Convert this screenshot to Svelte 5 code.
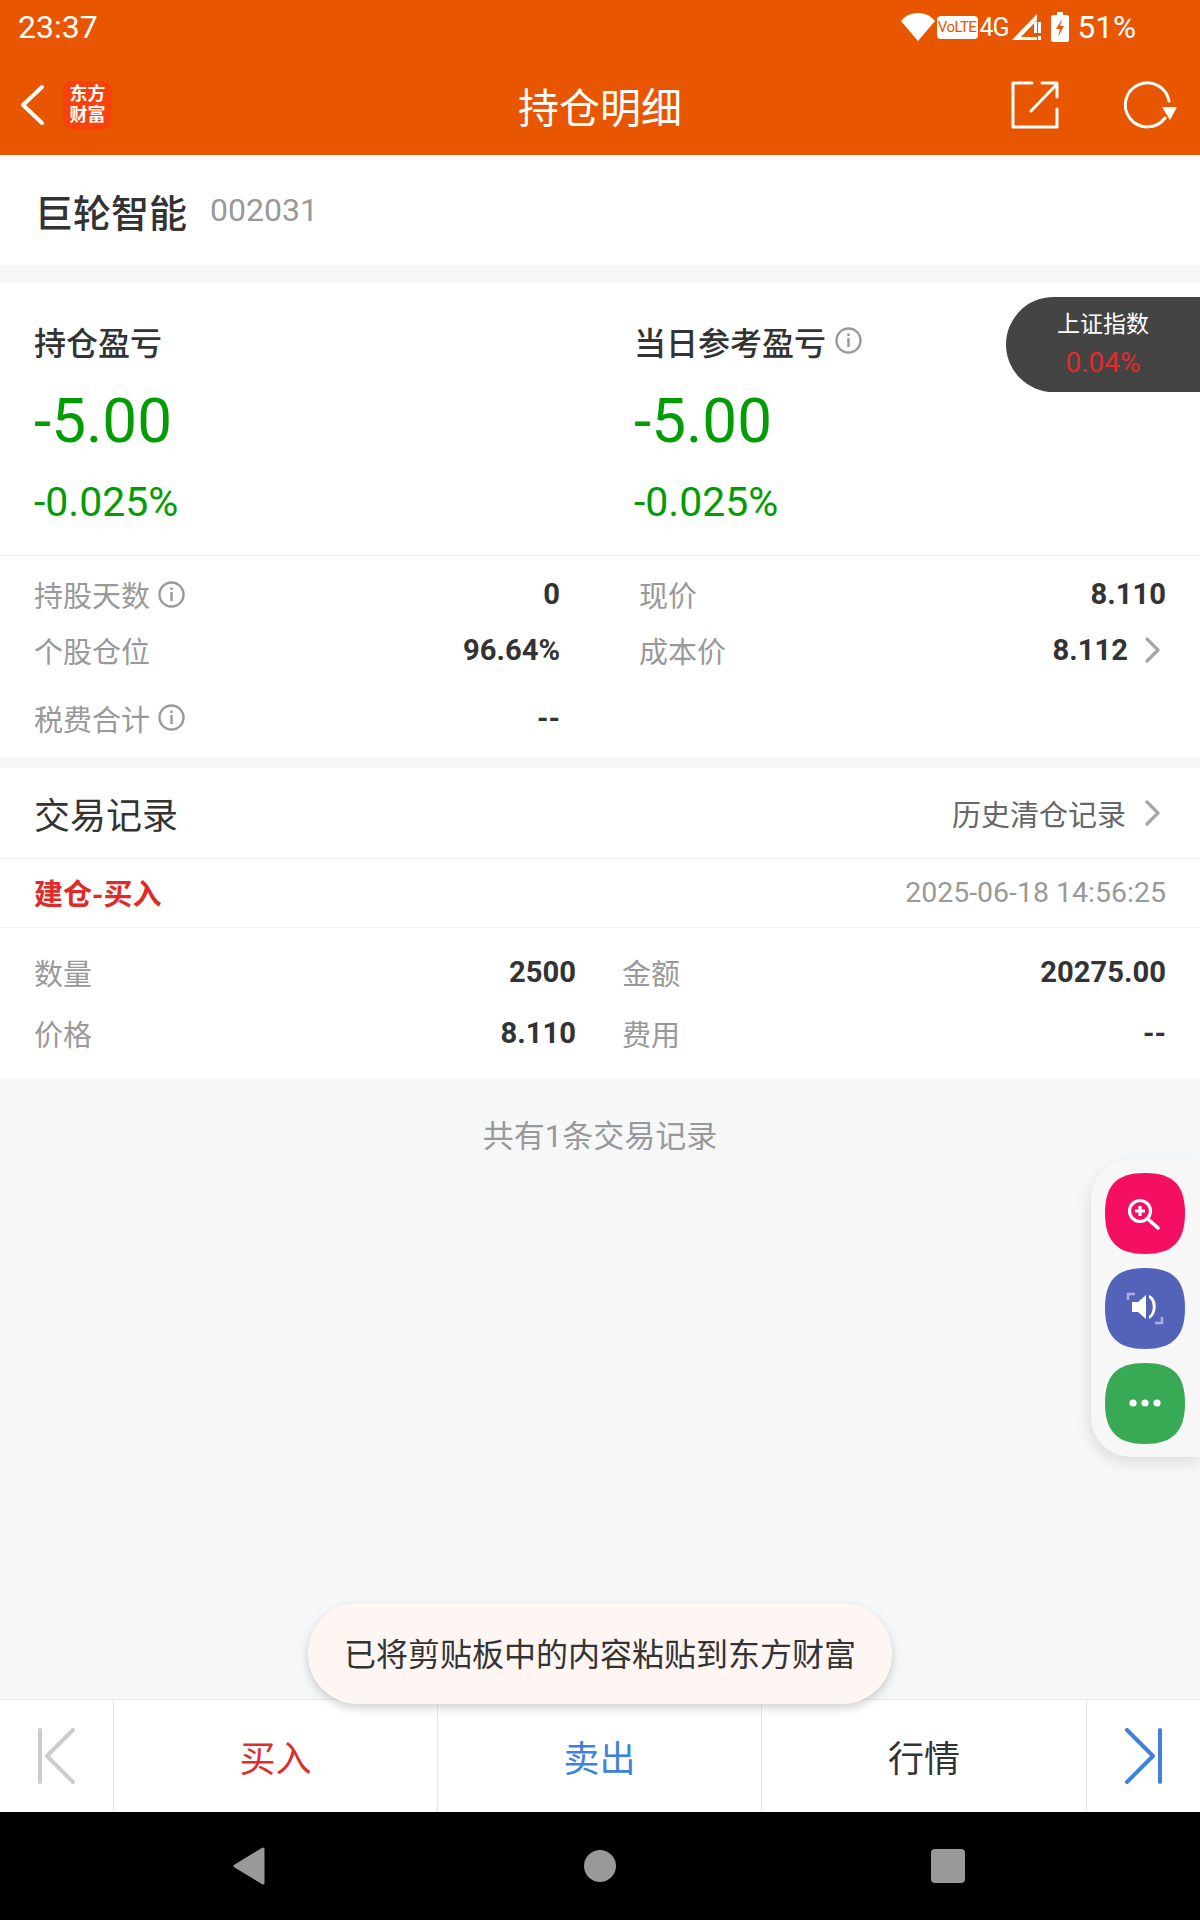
<script>
  const positionStats = [
    { label: '持股天数', info: true, value: '0' },
    { label: '现价', value: '8.110' },
    { label: '个股仓位', value: '96.64%' },
    { label: '成本价', value: '8.112', more: true },
    { label: '税费合计', info: true, value: '--' }
  ];

  const tradeStats = [
    { label: '数量', value: '2500' },
    { label: '金额', value: '20275.00' },
    { label: '价格', value: '8.110' },
    { label: '费用', value: '--' }
  ];

  const summary = [
    { label: '持仓盈亏', info: false },
    { label: '当日参考盈亏', info: true }
  ];
</script>

<div class="screen">
  <header class="top">
    <div class="status">
      <span class="clock">23:37</span>
      <div class="status-icons">
        <svg class="wifi" width="34" height="28" viewBox="0 0 34 28"><path d="M0 8C5 2 11 0 17 0s12 2 17 8L17 28Z" fill="#fff"/></svg>
        <span class="volte">VoLTE</span>
        <span class="net">4G</span>
        <svg class="signal" width="30" height="28" viewBox="0 0 30 28">
          <path d="M25 1v6L9 24h16v3H0Z" fill="#fff"/>
          <path d="M25 8v12h-3V10ZM26 9h3v11h-3ZM26 23h3v4h-3Z" fill="#fff"/>
        </svg>
        <svg class="battery" width="18" height="30" viewBox="0 0 18 30">
          <path d="M6 0h6v3h4a2 2 0 0 1 2 2v23a2 2 0 0 1-2 2H2a2 2 0 0 1-2-2V5a2 2 0 0 1 2-2h4Z" fill="#fff"/>
          <path d="M11 7 5 17h4l-2 8 6-11H9Z" fill="#e85700"/>
        </svg>
        <span class="level">51%</span>
      </div>
    </div>
    <nav class="bar">
      <div class="bar-left">
        <svg width="26" height="42" viewBox="0 0 26 42"><path d="M23 3 4 21l19 18" fill="none" stroke="#fff" stroke-width="4" stroke-linecap="round" stroke-linejoin="round"/></svg>
        <div class="logo"><span>东方</span><span>财富</span></div>
      </div>
      <h1>持仓明细</h1>
      <div class="bar-right">
        <svg width="48" height="48" viewBox="0 0 48 48" fill="none" stroke="#fff" stroke-width="3" stroke-linecap="round" stroke-linejoin="round">
          <path d="M21 2H2v44h44V28"/>
          <path d="M20 30 46 3M31 2h15v14"/>
        </svg>
        <svg width="54" height="48" viewBox="0 0 54 48" fill="none">
          <path d="M41 37a22 22 0 1 1 4-17" stroke="#fff" stroke-width="3" stroke-linecap="round"/>
          <path d="M38 26h15l-7 13Z" fill="#fff"/>
        </svg>
      </div>
    </nav>
  </header>

  <main>
    <section class="stock">
      <strong>巨轮智能</strong>
      <span>002031</span>
    </section>

    <section class="card">
      <div class="index">
        <span>上证指数</span>
        <em>0.04%</em>
      </div>
      <div class="summary">
        {#each summary as item}
          <div class="summary-col">
            <div class="summary-label">
              {item.label}
              {#if item.info}
                <svg class="info" width="27" height="27" viewBox="0 0 27 27"><circle cx="13.5" cy="13.5" r="12" fill="none" stroke="#999" stroke-width="2.4"/><path d="M12.3 11h2.4v9h-2.4ZM12.3 6.5h2.4v2.4h-2.4Z" fill="#999"/></svg>
              {/if}
            </div>
            <div class="big">-5.00</div>
            <div class="pct">-0.025%</div>
          </div>
        {/each}
      </div>
      <div class="position">
        {#each positionStats as stat}
          <div class="stat">
            <span class="stat-label">
              {stat.label}
              {#if stat.info}
                <svg class="info" width="27" height="27" viewBox="0 0 27 27"><circle cx="13.5" cy="13.5" r="12" fill="none" stroke="#999" stroke-width="2.4"/><path d="M12.3 11h2.4v9h-2.4ZM12.3 6.5h2.4v2.4h-2.4Z" fill="#999"/></svg>
              {/if}
            </span>
            <span class="stat-value">
              {stat.value}
              {#if stat.more}
                <svg class="chevron" width="16" height="26" viewBox="0 0 16 26"><path d="m2 2 11 11L2 24" fill="none" stroke="#a6a6a6" stroke-width="3.2" stroke-linecap="round" stroke-linejoin="round"/></svg>
              {/if}
            </span>
          </div>
        {/each}
      </div>
    </section>

    <section class="trades">
      <div class="trades-head">
        <h2>交易记录</h2>
        <span class="history">
          历史清仓记录
          <svg width="16" height="26" viewBox="0 0 16 26"><path d="m2 2 11 11L2 24" fill="none" stroke="#a6a6a6" stroke-width="3.2" stroke-linecap="round" stroke-linejoin="round"/></svg>
        </span>
      </div>
      <div class="trade-title">
        <b>建仓-买入</b>
        <span>2025-06-18 14:56:25</span>
      </div>
      <div class="trade-grid">
        {#each tradeStats as stat}
          <div class="stat">
            <span class="stat-label">{stat.label}</span>
            <span class="stat-value">{stat.value}</span>
          </div>
        {/each}
      </div>
    </section>

    <p class="count">共有1条交易记录</p>

    <aside class="float">
      <svg width="80" height="81" viewBox="0 0 80 81">
        <path d="M40 0C68 0 80 12 80 40s-12 41-40 41S0 68 0 40 12 0 40 0Z" fill="#f50f63"/>
        <circle cx="35" cy="38" r="10.5" fill="none" stroke="#fff" stroke-width="3.2"/>
        <path d="M35 33v10M30 38h10" stroke="#fff" stroke-width="3.2"/>
        <path d="m43 46 10 9" stroke="#fff" stroke-width="3.6" stroke-linecap="round"/>
      </svg>
      <svg width="80" height="81" viewBox="0 0 80 81">
        <path d="M40 0C68 0 80 12 80 40s-12 41-40 41S0 68 0 40 12 0 40 0Z" fill="#5263b9"/>
        <path d="M23 32v-6h7M57 49v6h-7" fill="none" stroke="#a9b1dc" stroke-width="2.6"/>
        <path d="M27 34h6l8-7v24l-8-7h-6Z" fill="#fff"/>
        <path d="M44 27c9 3 9 20 0 24v-3c5-3 5-15 0-18Z" fill="#fff"/>
      </svg>
      <svg width="80" height="81" viewBox="0 0 80 81">
        <path d="M40 0C68 0 80 12 80 40s-12 41-40 41S0 68 0 40 12 0 40 0Z" fill="#38a955"/>
        <circle cx="28" cy="40" r="3.6" fill="#fff"/>
        <circle cx="40" cy="40" r="3.6" fill="#fff"/>
        <circle cx="52" cy="40" r="3.6" fill="#fff"/>
      </svg>
    </aside>

    <div class="toast">已将剪贴板中的内容粘贴到东方财富</div>
  </main>

  <footer class="actions">
    <button class="edge">
      <svg width="38" height="56" viewBox="0 0 38 56" fill="none" stroke="#ccc" stroke-width="4" stroke-linecap="round" stroke-linejoin="round"><path d="M3 2v52M36 2 10 28l26 26"/></svg>
    </button>
    <button class="buy">买入</button>
    <button class="sell">卖出</button>
    <button class="quote">行情</button>
    <button class="edge">
      <svg width="38" height="56" viewBox="0 0 38 56" fill="none" stroke="#3f82d9" stroke-width="4" stroke-linecap="round" stroke-linejoin="round"><path d="M35 2v52M2 2l26 26L2 54"/></svg>
    </button>
  </footer>

  <div class="softkeys">
    <svg width="34" height="38" viewBox="0 0 34 38"><path d="M31 2 3 19l28 17Z" fill="#999" stroke="#999" stroke-width="3" stroke-linejoin="round"/></svg>
    <span class="dot"></span>
    <span class="square"></span>
  </div>
</div>

<style>
  :global(body) {
    margin: 0;
  }
  .screen {
    display: flex;
    flex-direction: column;
    height: 1920px;
    overflow: hidden;
    background: #f6f7f9;
    color: #333;
    font-family: Roboto, "Noto Sans CJK SC", sans-serif;
  }

  .top {
    flex: none;
    height: 155px;
    background: #e85700;
    color: #fff;
  }
  .status {
    display: flex;
    align-items: center;
    justify-content: space-between;
    height: 54px;
    padding: 0 64px 0 18px;
    font-size: 32px;
  }
  .status-icons {
    display: flex;
    align-items: center;
  }
  .wifi {
    margin-right: 2px;
  }
  .volte {
    width: 41px;
    height: 23px;
    border-radius: 4px;
    background: #fff;
    color: #e85700;
    font-size: 15px;
    line-height: 23px;
    text-align: center;
    letter-spacing: -0.6px;
  }
  .net {
    width: 31px;
    margin-left: 2px;
    font-size: 25px;
    letter-spacing: -1px;
  }
  .signal {
    margin-left: 1px;
  }
  .battery {
    margin-left: 9px;
  }
  .level {
    margin-left: 9px;
    font-size: 31.5px;
  }

  .bar {
    display: grid;
    grid-template-columns: 1fr auto 1fr;
    align-items: center;
    height: 101px;
    padding: 0 22px;
  }
  .bar-left {
    display: flex;
    align-items: center;
    gap: 18px;
    margin-left: -3px;
  }
  .logo {
    display: flex;
    flex-direction: column;
    align-items: center;
    justify-content: center;
    width: 49px;
    height: 48px;
    border-radius: 8px;
    background: #f8420a;
    font-family: "Liberation Serif", "Noto Sans CJK SC", serif;
    font-size: 18px;
    font-weight: 700;
    line-height: 21px;
  }
  .bar h1 {
    margin: 0;
    font-size: 41px;
    font-weight: 400;
  }
  .bar-right {
    display: flex;
    align-items: center;
    justify-content: flex-end;
    gap: 65px;
  }

  main {
    position: relative;
    flex: 1;
    min-height: 0;
  }

  .stock {
    display: flex;
    align-items: center;
    gap: 23px;
    height: 110px;
    padding: 0 35px;
    background: #fff;
  }
  .stock strong {
    font-size: 38px;
    font-weight: 500;
  }
  .stock span {
    color: #999;
    font-size: 32px;
  }

  .card {
    position: relative;
    margin-top: 18px;
    background: #fff;
  }
  .index {
    position: absolute;
    top: 14px;
    right: 0;
    display: flex;
    flex-direction: column;
    align-items: center;
    width: 194px;
    height: 95px;
    box-sizing: border-box;
    padding-top: 12px;
    border-radius: 48px 0 0 48px;
    background: #444;
    color: #fff;
    font-size: 23px;
    line-height: 32px;
  }
  .index em {
    margin-top: 6px;
    color: #e02b2b;
    font-size: 28px;
    font-style: normal;
  }
  .summary {
    display: grid;
    grid-template-columns: 600px 1fr;
    height: 273px;
    padding-left: 34px;
    box-sizing: border-box;
    border-bottom: 1px solid #f3f3f3;
  }
  .summary-label {
    display: flex;
    align-items: center;
    gap: 9px;
    height: 44px;
    margin-top: 36px;
    font-size: 32px;
    font-weight: 500;
  }
  .summary-label .info {
    margin-top: -2px;
  }
  .big {
    margin-top: 22px;
    color: #049c04;
    font-size: 62px;
    line-height: 72px;
  }
  .pct {
    margin-top: 21px;
    color: #049c04;
    font-size: 41px;
    line-height: 48px;
  }

  .position {
    display: grid;
    grid-template-columns: 526px 527px;
    grid-template-rows: 56px 55px 81px;
    column-gap: 79px;
    height: 201px;
    box-sizing: border-box;
    padding: 10px 34px 0;
  }
  .stat {
    display: flex;
    align-items: center;
    justify-content: space-between;
  }
  .stat-label {
    display: flex;
    align-items: center;
    gap: 8px;
    color: #999;
    font-size: 29px;
  }
  .stat-value {
    display: flex;
    align-items: center;
    gap: 17px;
    font-size: 29.2px;
    font-weight: 700;
  }
  .chevron {
    margin-right: 5px;
  }

  .trades {
    margin-top: 11px;
    background: #fff;
  }
  .trades-head {
    display: flex;
    align-items: center;
    justify-content: space-between;
    height: 90px;
    padding: 0 39px 0 34px;
    border-bottom: 1px solid #f3f3f3;
  }
  .trades-head h2 {
    margin: 0;
    font-size: 36px;
    font-weight: 400;
  }
  .history {
    display: flex;
    align-items: center;
    gap: 19px;
    color: #666;
    font-size: 29px;
  }
  .trade-title {
    display: flex;
    align-items: center;
    justify-content: space-between;
    height: 66px;
    padding: 0 34px 2px;
    border-bottom: 1px solid #f3f3f3;
  }
  .trade-title b {
    color: #e02b2b;
    font-size: 29px;
    font-weight: 700;
  }
  .trade-title span {
    color: #999;
    font-size: 28.5px;
  }
  .trade-grid {
    display: grid;
    grid-template-columns: 542px 544px;
    grid-auto-rows: 61px;
    column-gap: 46px;
    padding: 13px 34px 15px;
  }

  .count {
    margin: 0;
    padding-top: 39px;
    color: #999;
    font-size: 31px;
    line-height: 40px;
    text-align: center;
  }

  .float {
    position: absolute;
    top: 1004px;
    right: 0;
    display: flex;
    flex-direction: column;
    gap: 14px;
    width: 109px;
    height: 298px;
    box-sizing: border-box;
    padding: 14px 0 0 14px;
    border-radius: 40px 0 0 40px;
    background: #f7f7f7;
    box-shadow: -2px 6px 14px rgba(0, 0, 0, 0.1);
  }

  .toast {
    position: absolute;
    top: 1448px;
    left: 308px;
    width: 584px;
    height: 101px;
    border-radius: 50px;
    background: #fff6f3;
    box-shadow: 0 4px 10px rgba(0, 0, 0, 0.18);
    font-size: 32px;
    line-height: 105px;
    text-align: center;
  }

  .actions {
    flex: none;
    display: grid;
    grid-template-columns: 114px 324px 324px 325px 113px;
    height: 113px;
    box-sizing: border-box;
    border-top: 1px solid #e8e8e8;
    background: #fff;
  }
  .actions button {
    display: flex;
    align-items: center;
    justify-content: center;
    padding: 0;
    border: 0;
    border-right: 1px solid #e8e8e8;
    background: none;
    font-family: inherit;
    font-size: 36px;
  }
  .actions button:last-child {
    border-right: 0;
  }
  .actions button:first-child svg {
    margin-right: 2px;
  }
  .buy {
    color: #e02b2b;
  }
  .sell {
    color: #3f82d9;
  }
  .quote {
    color: #333;
  }

  .softkeys {
    flex: none;
    display: grid;
    grid-template-columns: 232px 34px 318px 32px 315px 34px 235px;
    align-items: center;
    height: 108px;
    background: #000;
  }
  .softkeys svg {
    grid-column: 2;
  }
  .dot {
    grid-column: 4;
    width: 32px;
    height: 32px;
    border-radius: 50%;
    background: #999;
  }
  .square {
    grid-column: 6;
    width: 34px;
    height: 34px;
    border-radius: 4px;
    background: #999;
  }
</style>
